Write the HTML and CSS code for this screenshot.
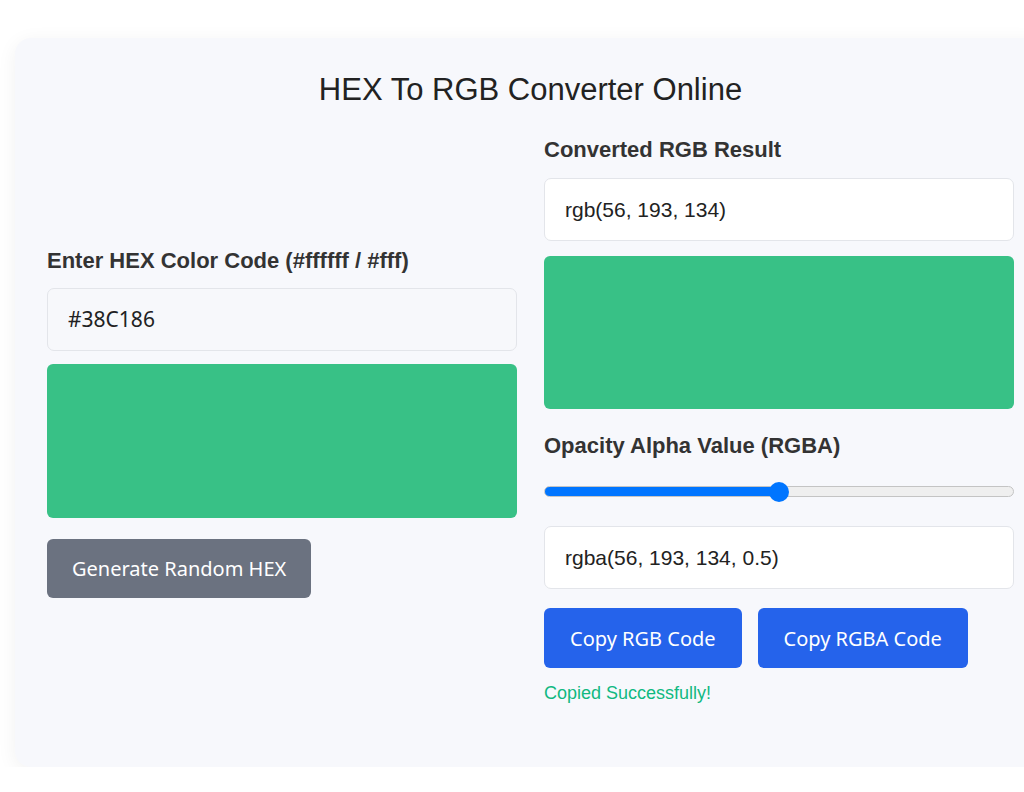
FILE: index.html
```html
<!DOCTYPE html>
<html lang="en">
<head>
<meta charset="utf-8">
<title>HEX To RGB Converter Online</title>
<link rel="stylesheet" href="styles.css">
</head>
<body>
<main class="card">
  <h1 class="title">HEX To RGB Converter Online</h1>
  <div class="grid">
    <section class="col col-left">
      <label class="label label-hex" for="hex">Enter HEX Color Code (#ffffff / #fff)</label>
      <input id="hex" class="field field-hex" type="text" value="#38C186">
      <div class="swatch swatch-left"></div>
      <button class="btn btn-gray">Generate Random HEX</button>
    </section>
    <section class="col">
      <label class="label label-rgb" for="rgb">Converted RGB Result</label>
      <input id="rgb" class="field field-out" type="text" value="rgb(56, 193, 134)" readonly>
      <div class="swatch swatch-right"></div>
      <label class="label label-alpha" for="alpha">Opacity Alpha Value (RGBA)</label>
      <input id="alpha" class="range" type="range" min="0" max="1" step="0.01" value="0.5">
      <input class="field field-out field-rgba" type="text" value="rgba(56, 193, 134, 0.5)" readonly>
      <div class="actions">
        <button class="btn btn-blue">Copy RGB Code</button>
        <button class="btn btn-blue">Copy RGBA Code</button>
      </div>
      <p class="status">Copied Successfully!</p>
    </section>
  </div>
</main>
</body>
</html>
```
FILE: styles.css
```css
html, body {
  margin: 0;
  padding: 0;
  background: #ffffff;
  overflow: hidden;
}
body {
  font-family: "Liberation Sans", Arial, sans-serif;
  color: #333333;
}
.card {
  box-sizing: border-box;
  width: 1031px;
  margin: 38px 0 0 15px;
  padding: 34px 32px 63px;
  background: #f7f8fc;
  border-radius: 16px;
  box-shadow: 0 4px 20px rgba(0, 0, 0, 0.06);
}
.title {
  margin: 0 0 30px;
  font-size: 31px;
  font-weight: 400;
  line-height: 35px;
  text-align: center;
  color: #222222;
}
.grid {
  display: grid;
  grid-template-columns: 1fr 1fr;
  column-gap: 27px;
  align-items: center;
}
.col {
  display: flex;
  flex-direction: column;
  align-items: flex-start;
}
.col-left {
  padding-top: 4px;
}
.label {
  display: block;
  font-size: 22px;
  font-weight: 700;
  line-height: 25px;
  color: #333333;
}
.label-hex { margin-bottom: 15px; }
.label-rgb { margin-bottom: 16px; }
.label-alpha { margin: 24px 0 0; }
.field {
  box-sizing: border-box;
  width: 100%;
  height: 63px;
  margin: 0;
  padding: 0 20px;
  border: 1px solid #e3e5ea;
  border-radius: 7px;
  font-size: 21px;
  color: #222222;
  outline: none;
}
.field-hex {
  background: #f7f8fb;
  font-family: "Noto Sans", "Open Sans", sans-serif;
}
.field-out {
  background: #ffffff;
  font-family: "Liberation Sans", Arial, sans-serif;
}
.swatch {
  width: 100%;
  background: #38c186;
  border-radius: 6px;
}
.swatch-left { height: 154px; margin-top: 13px; }
.swatch-right { height: 153px; margin-top: 15px; }
.range {
  -webkit-appearance: none;
  appearance: none;
  box-sizing: border-box;
  width: 100%;
  height: 11px;
  margin: 28px 0 29px;
  border: 1px solid #c4c4c4;
  border-radius: 6px;
  background: linear-gradient(to right, #0075ff 0%, #0075ff 50%, #efefef 50%, #efefef 100%);
  outline: none;
}
.range::-webkit-slider-thumb {
  -webkit-appearance: none;
  appearance: none;
  width: 20px;
  height: 20px;
  border-radius: 50%;
  background: #0075ff;
  border: none;
}
.btn {
  height: 60px;
  padding: 0 26px;
  border: none;
  border-radius: 6px;
  font-family: "Noto Sans", "Open Sans", sans-serif;
  font-size: 20px;
  color: #ffffff;
  cursor: pointer;
}
.btn-gray {
  margin-top: 21px;
  height: 59px;
  padding: 0 25px;
  background: #6b7280;
}
.actions {
  display: flex;
  gap: 16px;
  margin-top: 19px;
}
.btn-blue {
  background: #2563eb;
}
.status {
  margin: 15px 0 0;
  font-size: 18px;
  line-height: 21px;
  color: #10b981;
}
```
